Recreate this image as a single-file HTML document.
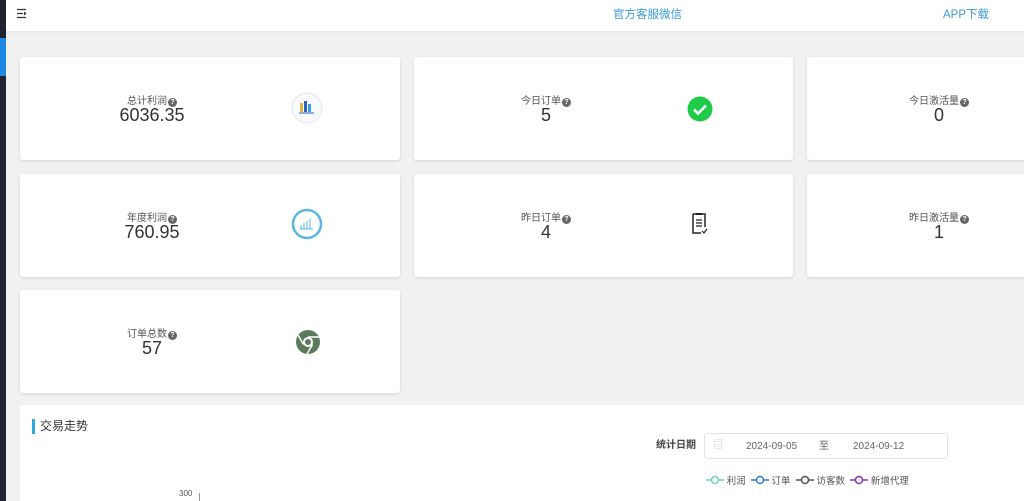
<!DOCTYPE html>
<html><head><meta charset="utf-8"><style>
*{margin:0;padding:0;box-sizing:border-box}
html,body{width:1024px;height:501px;overflow:hidden}
body{background:#f1f1f1;font-family:"Liberation Sans","Noto Sans CJK SC",sans-serif;position:relative}
.side{position:absolute;left:0;top:0;width:6px;height:501px;background:#1f2230}
.side i{position:absolute;left:0;top:38px;width:6px;height:38px;background:#1e88e5}
.hdr{position:absolute;left:6px;top:0;right:0;height:31px;background:#fff;box-shadow:0 1px 2px rgba(0,0,0,.06)}
.hdr a{position:absolute;top:8px;font-size:11.5px;line-height:14px;color:#3a9bd5}
.card{position:absolute;background:#fff;border-radius:3px;box-shadow:0 1px 3px rgba(0,0,0,.12);height:103px}
.t{position:absolute;top:39px;width:150px;text-align:center;color:#555;font-size:10px;line-height:12px}
.t b{display:inline-block;width:9px;height:9px;border-radius:50%;background:#666;color:#fff;font-size:7px;line-height:9px;vertical-align:0px;margin-left:1px}
.v{position:absolute;top:48px;width:150px;text-align:center;color:#333;font-size:18px;line-height:20px}
.ic{position:absolute;top:36px}
.panel{position:absolute;left:20px;top:405px;right:0;height:100px;background:#fff}
</style></head><body>
<div class="side"><i></i></div>
<div class="hdr">
<svg style="position:absolute;left:10px;top:8px" width="12" height="11"><path d="M1 1.5H10M1 5.5H7M1 9.5H10" stroke="#333" stroke-width="1.3"/><path d="M8 3.5L10.5 5.5 8 7.5Z" fill="#333"/></svg>
<a style="left:607px">官方客服微信</a><a style="left:937px">APP下载</a>
</div>

<div class="card" style="left:20px;top:57px;width:380px"><div class="t" style="left:57px">总计利润<b>?</b></div><div class="v" style="left:57px">6036.35</div>
<svg class="ic" style="left:271px;top:35px" width="32" height="32"><circle cx="16" cy="16" r="15" fill="#f7f9fc" stroke="#e3e7ee"/><rect x="9" y="11" width="3" height="9" fill="#e8b33a"/><rect x="13" y="9" width="3" height="11" fill="#2b63c9"/><rect x="17" y="12" width="3" height="8" fill="#3aa0e0"/><path d="M8 21H23" stroke="#2b63c9"/></svg></div>
<div class="card" style="left:414px;top:57px;width:379px"><div class="t" style="left:57px">今日订单<b>?</b></div><div class="v" style="left:57px">5</div>
<svg class="ic" style="left:273px;top:39px" width="26" height="26"><circle cx="13" cy="13" r="12.5" fill="#1fcc4a"/><path d="M7 13.5L11 17.5 19 9.5" stroke="#fff" stroke-width="2.6" fill="none"/></svg></div>
<div class="card" style="left:807px;top:57px;width:230px"><div class="t" style="left:57px">今日激活量<b>?</b></div><div class="v" style="left:57px">0</div></div>

<div class="card" style="left:20px;top:174px;width:380px"><div class="t" style="left:57px">年度利润<b>?</b></div><div class="v" style="left:57px">760.95</div>
<svg class="ic" style="left:271px;top:34px" width="32" height="32"><circle cx="16" cy="16" r="14" fill="#fff" stroke="#5ab6e0" stroke-width="2.5"/><path d="M10 21V17M13 21V15M16 21V13M19 21V11M9 21H22" stroke="#5ab6e0"/></svg></div>
<div class="card" style="left:414px;top:174px;width:379px"><div class="t" style="left:57px">昨日订单<b>?</b></div><div class="v" style="left:57px">4</div>
<svg class="ic" style="left:276px;top:38px" width="20" height="24"><path d="M3 2H15V15M3 2V21H11" stroke="#222" stroke-width="1.5" fill="none"/><rect x="6" y="1" width="6" height="2" fill="#222"/><path d="M6 8H12M6 11H12M6 14H12M12 19L14 21 17 17" stroke="#222" stroke-width="1.2" fill="none"/></svg></div>
<div class="card" style="left:807px;top:174px;width:230px"><div class="t" style="left:57px">昨日激活量<b>?</b></div><div class="v" style="left:57px">1</div></div>

<div class="card" style="left:20px;top:290px;width:380px"><div class="t" style="left:57px">订单总数<b>?</b></div><div class="v" style="left:57px">57</div>
<svg class="ic" style="left:276px;top:40px" width="24" height="24"><circle cx="12" cy="12" r="12" fill="#5a7a5c"/><circle cx="12" cy="12" r="5" fill="#fff"/><circle cx="12" cy="12" r="3" fill="#5a7a5c"/><path d="M12 7H23M7.5 14.5L2 5M16.5 14.5L11 24" stroke="#fff" stroke-width="1.5"/></svg></div>

<div class="panel">
<div style="position:absolute;left:12px;top:14px;width:3px;height:15px;background:#2ea7e0"></div>
<div style="position:absolute;left:20px;top:14px;font-size:12px;line-height:15px;color:#333">交易走势</div>
<div style="position:absolute;left:636px;top:35px;font-size:10px;line-height:12px;color:#444;font-weight:bold">统计日期</div>
<div style="position:absolute;left:684px;top:28px;width:244px;height:26px;border:1px solid #e3e3e3;border-radius:3px;font-size:10px;line-height:12px;color:#666">
<span style="position:absolute;left:8px;top:6px;color:#ccc">▤</span><span style="position:absolute;left:41px;top:7px">2024-09-05</span><span style="position:absolute;left:114px;top:7px">至</span><span style="position:absolute;left:148px;top:7px">2024-09-12</span></div>
<div style="position:absolute;left:686px;top:70px;font-size:9.5px;line-height:12px;color:#555;white-space:nowrap">
<svg width="18" height="10" style="vertical-align:-1px"><path d="M0 5H18" stroke="#6fd0c0" stroke-width="1.5"/><circle cx="9" cy="5" r="3.5" fill="#fff" stroke="#6fd0c0" stroke-width="1.5"/></svg> 利润 &nbsp;<svg width="18" height="10" style="vertical-align:-1px"><path d="M0 5H18" stroke="#2a7fd0" stroke-width="1.5"/><circle cx="9" cy="5" r="3.5" fill="#fff" stroke="#2a7fd0" stroke-width="1.5"/></svg> 订单 &nbsp;<svg width="18" height="10" style="vertical-align:-1px"><path d="M0 5H18" stroke="#555" stroke-width="1.5"/><circle cx="9" cy="5" r="3.5" fill="#fff" stroke="#555" stroke-width="1.5"/></svg> 访客数 &nbsp;<svg width="18" height="10" style="vertical-align:-1px"><path d="M0 5H18" stroke="#9030b0" stroke-width="1.5"/><circle cx="9" cy="5" r="3.5" fill="#fff" stroke="#9030b0" stroke-width="1.5"/></svg> 新增代理</div>
<div style="position:absolute;left:159px;top:84px;font-size:8px;line-height:10px;color:#555">300</div>
<div style="position:absolute;left:179px;top:88px;width:1px;height:20px;background:#999"></div>
</div>
</body></html>
